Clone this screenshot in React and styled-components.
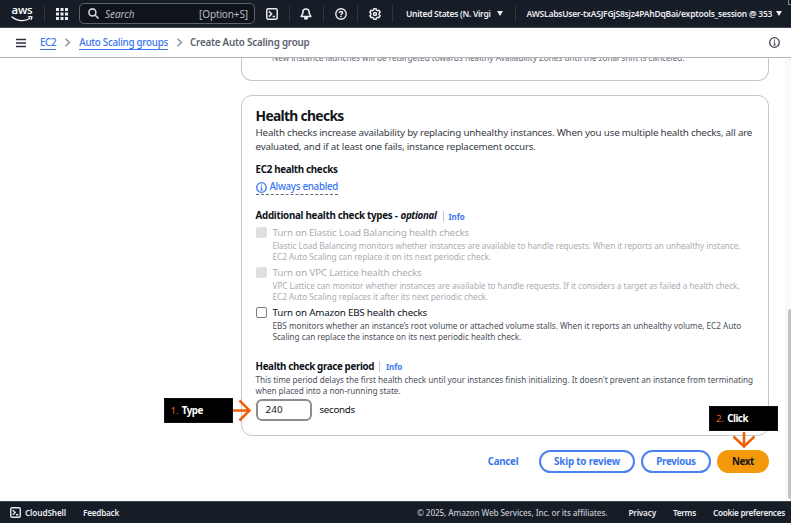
import React from "react";
import styled, { createGlobalStyle } from "styled-components";

const Global = createGlobalStyle`
  * { box-sizing: border-box; }
  html, body { margin: 0; height: 100%; overflow: hidden; }
  body { font-family: "Noto Sans", "Open Sans", sans-serif; background: #fff; color: #0f141a; }
  svg { display: block; flex: none; }
`;

const Page = styled.div`
  width: 791px;
  height: 523px;
  display: flex;
  flex-direction: column;
  overflow: hidden;
`;

const Text = styled.span`
  white-space: pre;
  letter-spacing: ${(p) => p.$ls || 0}px;
`;

const TopBar = styled.header`
  height: 28px;
  flex: none;
  display: flex;
  align-items: center;
  background: #161d26;
  border-bottom: 1px solid #424650;
  color: #ebebf0;
  font-size: 8.5px;
  font-weight: 600;
  padding-left: 11px;
  position: relative;
`;

const BarDivider = styled.i`
  width: 1px;
  height: 17px;
  background: #2f3642;
  margin-left: ${(p) => p.$l}px;
`;

const BarItem = styled.div`
  margin-left: ${(p) => p.$l}px;
  display: flex;
  align-items: center;
  height: 20px;
`;

const Caret = styled.i`
  width: 0;
  border: 3px solid transparent;
  border-top: 5px solid #ebebf0;
  border-bottom: 0;
  margin-left: ${(p) => p.$l}px;
`;

const CornerMark = styled.i`
  position: absolute;
  right: 0;
  top: 0;
  width: 3px;
  height: 5px;
  border-left: 1px solid #8c8c94;
  border-bottom: 1px solid #8c8c94;
`;

const SearchBox = styled.div`
  width: 176px;
  height: 21px;
  margin-left: 11px;
  border: 1.5px solid #5b626e;
  border-radius: 5px;
  background: #0f141a;
  display: flex;
  align-items: center;
  padding: 0 6px 0 8px;
  font-size: 10px;
  font-weight: 400;
  color: #b9bbc3;
`;

const Placeholder = styled(Text)`
  font-style: italic;
  margin-left: 6px;
  flex: 1;
`;

const Crumbs = styled.nav`
  height: 30px;
  flex: none;
  display: flex;
  align-items: center;
  border-bottom: 1px solid #b4b4bb;
  padding: 0 11px 0 16px;
  font-size: 9.8px;
`;

const CrumbLink = styled.a`
  color: #3b76ee;
  border-bottom: 1px solid #3b76ee;
  font-weight: 500;
  line-height: 13px;
  height: 14px;
  white-space: pre;
  letter-spacing: ${(p) => p.$ls}px;
  margin-left: ${(p) => p.$l}px;
`;

const CrumbCurrent = styled(Text)`
  color: #5c6370;
  font-weight: 600;
  margin-left: 7px;
  flex: 1;
`;

const Chevron = styled.svg`
  margin-left: 8px;
`;

const Body = styled.main`
  flex: 1;
  min-height: 0;
  display: flex;
`;

const Content = styled.div`
  flex: 1;
  padding-left: 241px;
  padding-right: 16px;
  display: flex;
  flex-direction: column;
`;

const ScrollTrack = styled.div`
  width: 6px;
  background: #f9f9fa;
  padding: 251px 0 2px 3px;
  display: flex;
`;

const ScrollThumb = styled.div`
  width: 3px;
  border-radius: 3px 0 0 3px;
  background: #c1c1c1;
`;

const PreviousCard = styled.section`
  height: 23px;
  flex: none;
  border: 1px solid #c6c6cd;
  border-top: 0;
  border-radius: 0 0 11px 11px;
  overflow: hidden;
  padding-left: 30px;
  font-size: 8.2px;
  line-height: 11px;
  color: #656871;
`;

const ClippedLine = styled.div`
  margin-top: -6px;
`;

const Card = styled.section`
  margin-top: 14px;
  height: 341px;
  flex: none;
  border: 1px solid #c6c6cd;
  border-radius: 11px;
  padding: 11px 14px 0 13.5px;
  display: flex;
  flex-direction: column;
  align-items: flex-start;
`;

const Title = styled.h2`
  margin: 0;
  font-size: 13.8px;
  font-weight: 700;
  line-height: 18px;
  letter-spacing: -0.66px;
`;

const Description = styled.div`
  margin-top: 1px;
  font-size: 9.8px;
  line-height: 14px;
  color: #373b45;
  display: flex;
  flex-direction: column;
`;

const Label = styled.div`
  margin-top: ${(p) => p.$t}px;
  height: 14px;
  flex: none;
  line-height: 14px;
  font-size: 9.8px;
  font-weight: 700;
  display: flex;
  align-items: center;
  white-space: pre;
`;

const Optional = styled(Text)`
  font-style: italic;
  margin-left: 3px;
`;

const Info = styled.a`
  border-left: 1px solid #c6c6cd;
  margin-left: ${(p) => p.$l}px;
  padding-left: ${(p) => p.$p}px;
  height: 11px;
  line-height: 11px;
  font-size: 8px;
  font-weight: 700;
  letter-spacing: -0.1px;
  color: #3b76ee;
`;

const Status = styled.div`
  margin-top: 3px;
  height: 15px;
  flex: none;
  display: flex;
  gap: 3px;
  font-size: 9.8px;
  font-weight: 500;
  line-height: 14px;
  align-items: center;
  color: #3b76ee;
  border-bottom: 1px dashed #656871;
`;

const Option = styled.div`
  margin-top: 3px;
  height: 36.8px;
  flex: none;
  display: grid;
  grid-template-columns: 11px auto;
  column-gap: 6px;
  color: ${(p) => (p.$disabled ? "#acacb4" : "#0f141a")};
`;

const CheckBox = styled.i`
  width: 11px;
  height: 11px;
  margin-top: 1px;
  border-radius: 2px;
  background: ${(p) => (p.$disabled ? "#dedee3" : "#fff")};
  border: 1.5px solid ${(p) => (p.$disabled ? "#dedee3" : "#7d7d86")};
`;

const OptionText = styled.div`
  display: flex;
  flex-direction: column;
  font-size: 9.8px;
  line-height: 14px;
`;

const Hint = styled.div`
  display: flex;
  flex-direction: column;
  font-size: 8.2px;
  line-height: 11.4px;
  color: ${(p) => (p.$disabled ? "#acacb4" : "#4b505b")};
`;

const Field = styled.div`
  margin-top: 2px;
  display: flex;
  align-items: center;
  gap: 8px;
  font-size: 9.8px;
  position: relative;
`;

const NumberBox = styled.div`
  width: 56px;
  height: 22px;
  border: 2px solid #8c8c94;
  border-radius: 6px;
  padding-left: 8px;
  display: flex;
  align-items: center;
`;

const TypeCallout = styled.div`
  position: absolute;
  right: 100%;
  top: -1px;
  margin-right: 4px;
  display: flex;
  align-items: center;
`;

const ClickCallout = styled.div`
  position: absolute;
  right: -9px;
  bottom: 25px;
  display: flex;
  flex-direction: column;
  align-items: center;
`;

const CalloutTag = styled.div`
  width: 69px;
  height: 25px;
  background: #000;
  border: 1px solid #111;
  color: #fff;
  display: flex;
  align-items: center;
  gap: 3px;
  padding-left: 6px;
  font-size: 9.8px;
  font-weight: 700;
`;

const Step = styled.span`
  color: #e8611c;
  font-weight: 400;
`;

const Actions = styled.div`
  margin-top: 14px;
  display: flex;
  justify-content: flex-end;
  gap: 6px;
`;

const Button = styled.button`
  width: ${(p) => p.$w}px;
  height: 23px;
  padding: 0;
  border-radius: 12px;
  border: 2px solid ${(p) => (p.$kind === "outline" ? "#4a80ef" : p.$kind === "primary" ? "#f4990b" : "transparent")};
  background: ${(p) => (p.$kind === "primary" ? "#f4990b" : "#fff")};
  color: ${(p) => (p.$kind === "primary" ? "#0f141a" : "#3b76ee")};
  font: 700 9.8px/18px "Noto Sans", sans-serif;
  letter-spacing: ${(p) => p.$ls}px;
`;

const Anchor = styled.div`
  position: relative;
  display: flex;
  align-items: flex-start;
`;

const Footer = styled.footer`
  height: 22px;
  flex: none;
  background: #161d26;
  border-top: 1px solid #424650;
  color: #ebebf0;
  font-size: 8.2px;
  font-weight: 600;
  display: flex;
  align-items: center;
  padding: 0 6px 0 10px;
`;

const ShellLink = styled.a`
  display: flex;
  align-items: center;
  gap: 4px;
`;

const Feedback = styled(Text)`
  margin-left: 17px;
  flex: 1;
`;

const Copyright = styled(Text)`
  font-weight: 500;
  color: #c6c6cd;
`;

const FooterLink = styled(Text)`
  margin-left: ${(p) => p.$l}px;
`;

const AwsWord = styled.div`
  width: 22px;
  display: flex;
  flex-direction: column;
  align-items: center;
  font: 600 11.5px/8px "Open Sans", sans-serif;
  letter-spacing: -0.2px;
  color: #fff;
`;

const Smile = styled.svg`
  margin-top: 2px;
`;

const AwsLogo = () => (
  <AwsWord>
    <span>aws</span>
    <Smile width="22" height="6" viewBox="0 0 22 6" fill="none" stroke="#fff" strokeWidth="1.3">
      <path d="M.6.6C6 5.600 14 5.600 19 2.200M17.200 1c2-.5 3.800-.4 3.800 0S20.600 2.700 19.700 3.800" />
    </Smile>
  </AwsWord>
);

const GridIcon = () => (
  <svg width="12" height="12" viewBox="0 0 12 12" fill="#ebebf0">
    {[0, 4.5, 9].map((y) => [0, 4.5, 9].map((x) => <rect key={x + "-" + y} x={x} y={y} width="3" height="3" />))}
  </svg>
);

const SearchIcon = () => (
  <svg width="11" height="11" viewBox="0 0 11 11" fill="none" stroke="#d0d0d6" strokeWidth="1.6">
    <circle cx="4.400" cy="4.400" r="3.500" />
    <path d="M7 7l3.500 3.500" />
  </svg>
);

const ShellIcon = ({ size = 12 }) => (
  <svg width={size} height={size} viewBox="0 0 12 12" fill="none" stroke="#ebebf0" strokeWidth="1.5">
    <rect x=".8" y=".8" width="10.400" height="10.400" rx="1.500" />
    <path d="M3 3.400l2.600 2.600L3 8.600M6.600 8.500h2.400" />
  </svg>
);

const BellIcon = () => (
  <svg width="12" height="12" viewBox="0 0 12 12" fill="none" stroke="#ebebf0" strokeWidth="1.6" strokeLinejoin="round">
    <path d="M6 1C3.900 1 2.900 2.500 2.900 4.200 2.900 6.200 2.200 7 1.200 8.500h9.600C9.800 7 9.100 6.200 9.100 4.200 9.100 2.500 8.100 1 6 1z" />
    <path d="M4.100 9h3.800v1.200a1.900 1.500 0 0 1-3.800 0z" fill="#ebebf0" stroke="none" />
  </svg>
);

const HelpIcon = () => (
  <svg width="12" height="12" viewBox="0 0 12 12" fill="none" stroke="#ebebf0" strokeWidth="1.4">
    <circle cx="6" cy="6" r="5.200" />
    <path d="M4.400 4.900C4.400 3 7.600 3 7.600 4.900 7.600 6 6 5.900 6 7.200M6 8v1.200" />
  </svg>
);

const GearIcon = () => (
  <svg width="12" height="12" viewBox="0 0 12 12" fill="none" stroke="#ebebf0" strokeWidth="1.500" strokeLinejoin="round">
    <path d="M4.900.8h2.200l.4 1.300 1.200.6 1.300-.4 1.100 1.900L10.200 5.300v1.400l.9 1.100L10 9.700l-1.300-.4-1.200.6-.4 1.300H4.900l-.4-1.300-1.200-.6-1.300.4L.9 7.800l.9-1.100V5.300L.9 4.200 2 2.300l1.300.4 1.200-.6z" />
    <circle cx="6" cy="6" r="1.500" />
  </svg>
);

const MenuIcon = () => (
  <svg width="10" height="10" viewBox="0 0 10 10" stroke="#2b313c" strokeWidth="1.300">
    <path d="M0 1.500h10M0 5h10M0 8.500h10" />
  </svg>
);

const InfoIcon = ({ color, size = 11 }) => (
  <svg width={size} height={size} viewBox="0 0 11 11" fill="none" stroke={color} strokeWidth="1.300">
    <circle cx="5.500" cy="5.500" r="4.800" />
    <path d="M5.500 2.600v1.200M4.500 5h1.100v2.900M4.300 8h2.500" strokeWidth="1" />
  </svg>
);

const CrumbArrow = () => (
  <Chevron width="7" height="9" viewBox="0 0 7 9" fill="none" stroke="#8c8c94" strokeWidth="1.400">
    <path d="M1.500.7L5.500 4.500 1.500 8.300" />
  </Chevron>
);

const ArrowRight = () => (
  <svg width="19" height="23" viewBox="0 0 19 23" fill="none" stroke="#f0600a" strokeWidth="2.500">
    <path d="M0 11.500h16.500M6.500 1.500l10 10-10 10" />
  </svg>
);

const ArrowDown = () => (
  <svg width="23" height="17" viewBox="0 0 23 17" fill="none" stroke="#f0600a" strokeWidth="2.600">
    <path d="M12 1v14M1.500 5.500l10.500 10 10.500-10" />
  </svg>
);

const options = [
  {
    disabled: true,
    title: ["Turn on Elastic Load Balancing health checks", -0.2],
    lines: [
      ["Elastic Load Balancing monitors whether instances are available to handle requests. When it reports an unhealthy instance,", -0.04],
      ["EC2 Auto Scaling can replace it on its next periodic check.", -0.01],
    ],
  },
  {
    disabled: true,
    title: ["Turn on VPC Lattice health checks", -0.16],
    lines: [
      ["VPC Lattice can monitor whether instances are available to handle requests. If it considers a target as failed a health check,", -0.03],
      ["EC2 Auto Scaling replaces it after its next periodic check.", 0],
    ],
  },
  {
    disabled: false,
    title: ["Turn on Amazon EBS health checks", -0.19],
    lines: [
      ["EBS monitors whether an instance’s root volume or attached volume stalls. When it reports an unhealthy volume, EC2 Auto", -0.02],
      ["Scaling can replace the instance on its next periodic health check.", -0.03],
    ],
  },
];

export default function App() {
  return (
    <Page>
      <Global />
      <TopBar>
        <AwsLogo />
        <BarDivider $l={11} />
        <BarItem $l={11}><GridIcon /></BarItem>
        <SearchBox>
          <SearchIcon />
          <Placeholder $ls={-0.05}>Search</Placeholder>
          <Text $ls={-0.12}>[Option+S]</Text>
        </SearchBox>
        <BarItem $l={11}><ShellIcon /></BarItem>
        <BarDivider $l={11} />
        <BarItem $l={10}><BellIcon /></BarItem>
        <BarDivider $l={11} />
        <BarItem $l={11}><HelpIcon /></BarItem>
        <BarDivider $l={10} />
        <BarItem $l={11}><GearIcon /></BarItem>
        <BarDivider $l={11} />
        <BarItem $l={13}>
          <Text $ls={-0.29}>United States (N. Virgi</Text>
          <Caret $l={6} />
        </BarItem>
        <BarDivider $l={12} />
        <BarItem $l={11}>
          <Text $ls={-0.23}>AWSLabsUser-txASJFGjS8sjz4PAhDqBai/exptools_session @ 353</Text>
          <Caret $l={4} />
        </BarItem>
        <CornerMark />
      </TopBar>

      <Crumbs>
        <MenuIcon />
        <CrumbLink $l={14} $ls={-0.35}>EC2</CrumbLink>
        <CrumbArrow />
        <CrumbLink $l={8} $ls={-0.26}>Auto Scaling groups</CrumbLink>
        <CrumbArrow />
        <CrumbCurrent $ls={-0.2}>Create Auto Scaling group</CrumbCurrent>
        <InfoIcon color="#424650" />
      </Crumbs>

      <Body>
        <Content>
          <PreviousCard>
            <ClippedLine>
              <Text>New instance launches will be retargeted towards healthy Availability Zones until the zonal shift is canceled.</Text>
            </ClippedLine>
          </PreviousCard>

          <Card>
            <Title>Health checks</Title>
            <Description>
              <Text $ls={-0.19}>Health checks increase availability by replacing unhealthy instances. When you use multiple health checks, all are</Text>
              <Text $ls={-0.19}>evaluated, and if at least one fails, instance replacement occurs.</Text>
            </Description>

            <Label $t={9}><Text $ls={-0.32}>EC2 health checks</Text></Label>
            <Status>
              <InfoIcon color="#3b76ee" />
              <Text $ls={-0.3}>Always enabled</Text>
            </Status>

            <Label $t={14}>
              <Text $ls={-0.28}>Additional health check types -</Text>
              <Optional $ls={-0.36}>optional</Optional>
              <Info $l={6} $p={5}>Info</Info>
            </Label>

            {options.map((o) => (
              <Option key={o.title[0]} $disabled={o.disabled}>
                <CheckBox $disabled={o.disabled} />
                <OptionText>
                  <Text $ls={o.title[1]}>{o.title[0]}</Text>
                  <Hint $disabled={o.disabled}>
                    {o.lines.map(([line, ls]) => <Text key={line} $ls={ls}>{line}</Text>)}
                  </Hint>
                </OptionText>
              </Option>
            ))}

            <Label $t={17.6}>
              <Text $ls={-0.36}>Health check grace period</Text>
              <Info $l={5} $p={6}>Info</Info>
            </Label>
            <Hint>
              <Text $ls={-0.02}>This time period delays the first health check until your instances finish initializing. It doesn't prevent an instance from terminating</Text>
              <Text $ls={-0.04}>when placed into a non-running state.</Text>
            </Hint>
            <Field>
              <NumberBox><Text $ls={0.2}>240</Text></NumberBox>
              <Text $ls={-0.34}>seconds</Text>
              <TypeCallout>
                <CalloutTag><Step>1.</Step><Text $ls={-0.5}>Type</Text></CalloutTag>
                <ArrowRight />
              </TypeCallout>
            </Field>
          </Card>

          <Actions>
            <Button $w={60} $ls={-0.31}>Cancel</Button>
            <Button $kind="outline" $w={96} $ls={-0.18}>Skip to review</Button>
            <Button $kind="outline" $w={70} $ls={-0.29}>Previous</Button>
            <Anchor>
              <Button $kind="primary" $w={52} $ls={-0.4}>Next</Button>
              <ClickCallout>
                <CalloutTag><Step>2.</Step><Text $ls={-0.5}>Click</Text></CalloutTag>
                <ArrowDown />
              </ClickCallout>
            </Anchor>
          </Actions>
        </Content>
        <ScrollTrack><ScrollThumb /></ScrollTrack>
      </Body>

      <Footer>
        <ShellLink><ShellIcon size={11} /><Text $ls={-0.11}>CloudShell</Text></ShellLink>
        <Feedback $ls={-0.24}>Feedback</Feedback>
        <Copyright $ls={-0.11}>© 2025, Amazon Web Services, Inc. or its affiliates.</Copyright>
        <FooterLink $l={21} $ls={-0.18}>Privacy</FooterLink>
        <FooterLink $l={17} $ls={-0.26}>Terms</FooterLink>
        <FooterLink $l={17} $ls={-0.27}>Cookie preferences</FooterLink>
      </Footer>
    </Page>
  );
}
